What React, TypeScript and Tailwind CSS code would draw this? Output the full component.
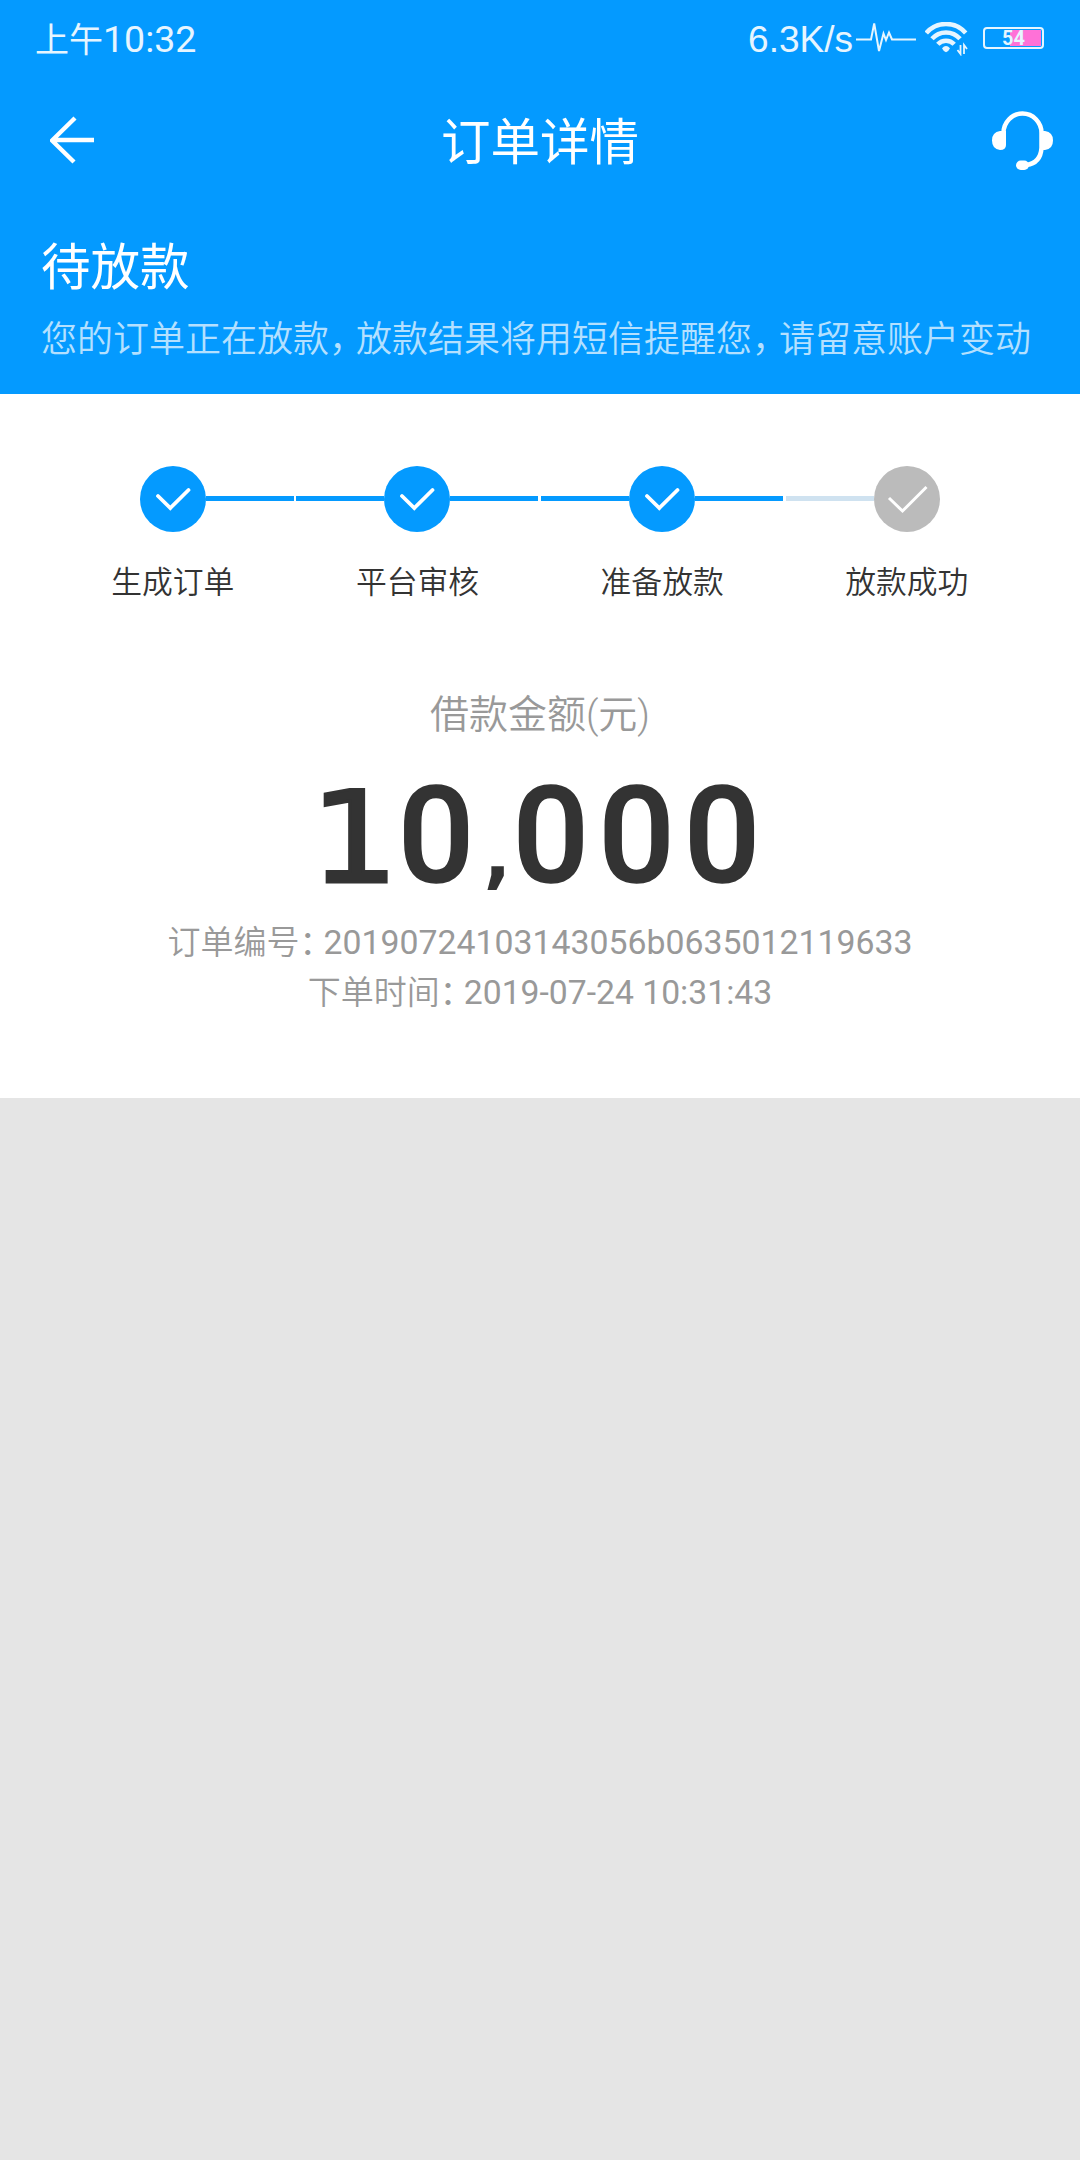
import { clsx } from "clsx";

interface Step {
  label: string;
  done: boolean;
}

const steps: Step[] = [
  { label: "生成订单", done: true },
  { label: "平台审核", done: true },
  { label: "准备放款", done: true },
  { label: "放款成功", done: false },
];

function StatusBar() {
  return (
    <div className="flex h-[78px] items-center justify-between pr-[36px] pl-[35px] text-[#e6f5ff]">
      <div className="flex items-center pt-[2px] leading-none">
        <span className="text-[34px]">上午</span>
        <span className="text-[37.5px]">10:32</span>
      </div>
      <div className="flex items-center">
        <span className="font-['Liberation_Sans',sans-serif] text-[37px] leading-none">
          6.3K/s
        </span>
        <svg className="ml-[2px] h-[34px] w-[62px]" viewBox="855 22 62 34" fill="none">
          <path
            d="M856 39.5H871L874.2 23.5L879 51L883.5 33.5L886 40L889 32.5L892 39.5H916"
            stroke="currentColor"
            strokeWidth="2"
          />
        </svg>
        <svg className="ml-[8px] h-[34px] w-[43px]" viewBox="925 22 43 34" fill="none">
          <g stroke="currentColor" strokeWidth="4.5">
            <path d="M926.3 33a26 26 0 0 1 39.4 0" />
            <path d="M932 38.8a18.5 18.5 0 0 1 28 0" />
            <path d="M937.8 44.3a11 11 0 0 1 16.4 0" />
          </g>
          <path d="M942 48.3q4-4.5 8 0q-1 2.500-4 4q-3-1.500-4-4z" fill="currentColor" />
          <path
            d="M960.5 45v9l-3-4M964 54v-9l3 4"
            stroke="currentColor"
            strokeWidth="1.8"
          />
        </svg>
        <div className="mb-[3px] ml-[15px] flex h-[22px] w-[61px] items-center justify-center rounded-[4px] border-2 border-current bg-[linear-gradient(#ff71d7,#ff71d7)] bg-[length:31px_16px] bg-[position:right_1px_center] bg-no-repeat">
          <span className="text-[20px] leading-none font-bold">54</span>
        </div>
      </div>
    </div>
  );
}

function NavBar() {
  return (
    <div className="grid h-[126px] grid-cols-[1fr_auto_1fr] items-center px-[26px]">
      <svg className="mb-[2px] ml-[24px] h-[48px] w-[62px]" viewBox="50 116 62 48" fill="none">
        <path d="M94 140H52M75 118L52 140.5L74 162" stroke="white" strokeWidth="4.4" />
      </svg>
      <h1 className="pt-[6px] text-[49.5px] leading-none">订单详情</h1>
      <svg className="h-[60px] w-[62px] justify-self-end" viewBox="992 111 62 60" fill="none">
        <path
          d="M1003.5 133a19 19.5 0 0 1 38 0v15q-1 15-15 17"
          stroke="white"
          strokeWidth="4.5"
        />
        <path
          d="M1006 131h-6q-8 1-8 9.5t8 9.5q6 0 6-5zM1040 131h5q8 1 8 9.5t-8 9.5h-5z"
          fill="white"
        />
        <rect x="1016" y="160.5" width="13" height="9.5" rx="4.75" fill="white" />
      </svg>
    </div>
  );
}

function StepLine({ tone }: { tone: "done" | "pending" | "none" }) {
  return (
    <span
      className={clsx(
        "mb-px h-[5px] w-[88px]",
        tone === "done" && "bg-[#049aff]",
        tone === "pending" && "bg-[#cfe2f0]",
      )}
    />
  );
}

function StepItem({ step, index }: { step: Step; index: number }) {
  const tone = step.done ? "done" : "pending";
  const isFirst = index === 0;
  const isLast = index === steps.length - 1;

  return (
    <li className="flex flex-col items-center">
      <div className="flex items-center">
        <StepLine tone={isFirst ? "none" : tone} />
        <svg className="size-[66px]" viewBox="0 0 66 66" fill="none">
          <circle cx="33" cy="33" r="33" fill={step.done ? "#049aff" : "#bbbbbb"} />
          {step.done ? (
            <path
              d="M18 30L30.3 42L48.5 24"
              stroke="white"
              strokeWidth="3.8"
              strokeLinecap="round"
            />
          ) : (
            <path d="M15 32L28.5 45L52.5 21" stroke="white" strokeWidth="3" />
          )}
        </svg>
        <StepLine tone={isLast ? "none" : tone} />
      </div>
      <span className="mt-[35px] text-[30.8px] leading-[32px] font-[350] text-[#333]">
        {step.label}
      </span>
    </li>
  );
}

function Amount() {
  return (
    <p className="mt-[36px] flex h-[132px] items-baseline pl-[8px] text-[134px] leading-[132px] font-medium text-[#333]">
      {/* the leading digit is set in a face whose "1" stands on a foot */}
      <span className="origin-right scale-x-110 font-['DejaVu_Sans',sans-serif] text-[127px] font-normal tracking-[-1px] [-webkit-text-stroke:3px_#333]">
        1
      </span>
      <span className="tracking-[9.5px] [-webkit-text-stroke:1.5px_#333]">0</span>
      <span className="relative -top-[4px] w-[29px] font-['DejaVu_Sans',sans-serif] text-[82px] font-normal [-webkit-text-stroke:4px_#333]">
        ,
      </span>
      <span className="tracking-[9.5px] [-webkit-text-stroke:1.5px_#333]">000</span>
    </p>
  );
}

export default function App() {
  return (
    <div className="min-h-[2160px] w-[1080px] bg-[#e5e5e5] font-[Roboto,'Noto_Sans_CJK_SC',sans-serif]">
      <header className="h-[394px] bg-[#049aff] text-white">
        <StatusBar />
        <NavBar />
        <div className="px-[41px] pt-[39px]">
          <h2 className="text-[49.5px] leading-[50px]">待放款</h2>
          <p className="mt-[29px] text-[36px] leading-[36px] font-[350] whitespace-nowrap text-[#b4e0ff]">
            您的订单正在放款<span className="tracking-[-9px]">，</span>
            放款结果将用短信提醒您<span className="tracking-[-9px]">，</span>
            请留意账户变动
          </p>
        </div>
      </header>

      <main className="h-[704px] bg-white pt-[72px]">
        <ul className="flex justify-between pr-[52.2px] pl-[51.8px]">
          {steps.map((step, index) => (
            <StepItem key={step.label} step={step} index={index} />
          ))}
        </ul>

        <section className="mt-[96px] flex flex-col items-center text-[#999]">
          <p className="text-[39px] leading-[40px] font-[350]">借款金额(元)</p>
          <Amount />
          <p className="mt-[15px] text-[33px] leading-[50px]">
            <span className="font-[350]">
              订单编号<span className="font-normal tracking-[-9px]">：</span>
            </span>
            <span className="text-[33.8px]">20190724103143056b0635012119633</span>
          </p>
          <p className="text-[33px] leading-[50px]">
            <span className="font-[350]">
              下单时间<span className="font-normal tracking-[-9px]">：</span>
            </span>
            <span className="text-[33.7px]">2019-07-24 10:31:43</span>
          </p>
        </section>
      </main>
    </div>
  );
}
